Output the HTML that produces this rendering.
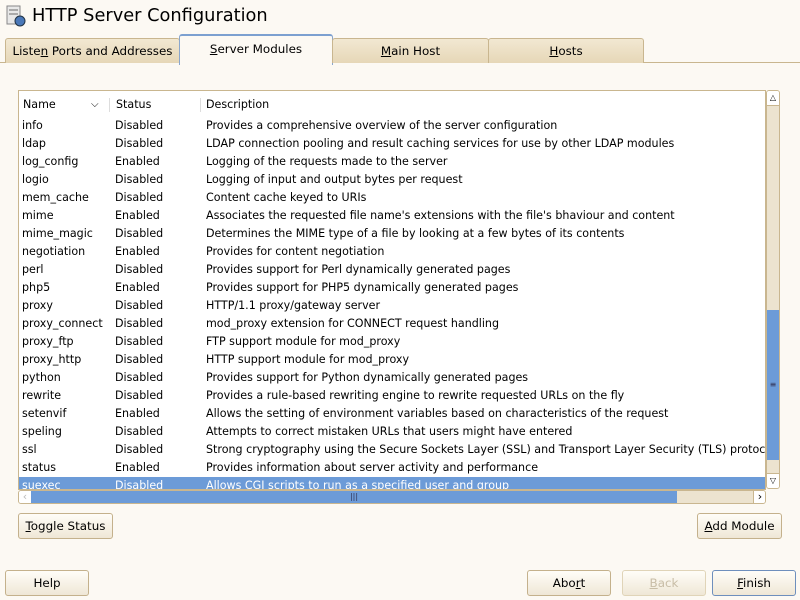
<!DOCTYPE html>
<html><head><style>
body{margin:0;width:800px;height:600px;background:#fcf9f3;font-family:"DejaVu Sans","Liberation Sans",sans-serif;font-size:11.1px;color:#000;position:relative;overflow:hidden}
.a{position:absolute}
.tab{position:absolute;top:38px;height:24px;border:1px solid #c9b68f;border-bottom:none;background:linear-gradient(#f2e8d2,#e6d7b7);text-align:center;line-height:24px;font-size:11.9px;border-radius:3px 3px 0 0}
.btn{position:absolute;height:24px;border:1px solid #c4b18c;border-radius:3px;background:linear-gradient(#fffdf8,#efe7d6);text-align:center;line-height:25px;font-size:11.9px}
.row{position:absolute;left:0;height:18px;line-height:18px;width:746px;white-space:nowrap}
.row span{position:absolute}
</style></head><body>
<svg class="a" style="left:5px;top:5px" width="22" height="22"><rect x="2" y="1" width="13" height="18" fill="#e8e8e8" stroke="#888"/><rect x="4" y="4" width="9" height="2" fill="#aaa"/><rect x="4" y="8" width="9" height="2" fill="#aaa"/><circle cx="15" cy="16" r="5" fill="#4a78b8" stroke="#234"/></svg>
<div class="a" style="left:32px;top:5px;font-size:17.8px">HTTP Server Configuration</div>
<div class="a" style="left:0;top:62px;width:800px;height:1px;background:#c9b68f"></div>
<div class="tab" style="left:5px;width:173px">Liste<u>n</u> Ports and Addresses</div>
<div class="tab" style="left:179px;top:34px;height:29px;width:152px;background:#fcf9f3;border-color:#8aa6cc;border-top:2px solid #7ca0d0;line-height:26px"><u>S</u>erver Modules</div>
<div class="tab" style="left:332px;width:155px"><u>M</u>ain Host</div>
<div class="tab" style="left:488px;width:154px"><u>H</u>osts</div>

<div class="a" style="left:18px;top:90px;width:746px;height:398px;border:1px solid #c9b68f;background:#fff;overflow:hidden">
 <div class="row" style="top:3px;height:22px;line-height:22px"><span style="left:4px">Name</span><span style="left:72px;font-size:10px">&#x2335;</span><span style="left:90px;top:4px;width:1px;height:14px;background:#ddd"></span><span style="left:97px">Status</span><span style="left:181px;top:4px;width:1px;height:14px;background:#ddd"></span><span style="left:187px">Description</span></div>
 <div id="rows"></div>
</div>
<div class="a" style="left:766px;top:90px;width:14px;height:399px;background:#ece3cf;border:1px solid #c9b68f;box-sizing:border-box;border-radius:3px;overflow:hidden">
 <div class="a" style="left:0;top:0;width:12px;height:14px;font-size:8px;line-height:14px;text-align:center;border-bottom:1px solid #c9b68f;background:#fff">&#9651;</div>
 <div class="a" style="left:0;top:219px;width:12px;height:150px;background:#6c9bd8;font-size:8px;color:#335;text-align:center;line-height:150px">≡</div>
 <div class="a" style="left:0;top:382px;width:12px;height:15px;font-size:8px;line-height:14px;text-align:center;border-top:1px solid #c9b68f;background:#fff">&#9661;</div>
</div>
<div class="a" style="left:18px;top:490px;width:748px;height:14px;background:#ece3cf;border:1px solid #c9b68f;box-sizing:border-box;border-radius:3px;overflow:hidden">
 <div class="a" style="left:0;top:0;width:12px;height:12px;background:#fff;color:#bbb;font-size:11px;line-height:12px;text-align:center">&lsaquo;</div>
 <div class="a" style="left:12px;top:0;width:646px;height:12px;background:#6c9bd8;font-size:8px;color:#335;text-align:center;line-height:12px">|||</div>
 <div class="a" style="left:734px;top:0;width:12px;height:12px;background:#fff;font-size:11px;text-align:center;line-height:12px;border-left:1px solid #c9b68f">&rsaquo;</div>
</div>

<div class="btn" style="left:18px;top:513px;width:93px"><u>T</u>oggle Status</div>
<div class="btn" style="left:697px;top:513px;width:83px"><u>A</u>dd Module</div>
<div class="btn" style="left:5px;top:570px;width:82px">Help</div>
<div class="btn" style="left:527px;top:570px;width:82px">Abo<u>r</u>t</div>
<div class="btn" style="left:622px;top:570px;width:82px;color:#c8bda6;border-color:#e0d4b8"><u>B</u>ack</div>
<div class="btn" style="left:712px;top:570px;width:82px;border-color:#6e8fbd"><u>F</u>inish</div>

<script>
var d=[["info","Disabled","Provides a comprehensive overview of the server configuration"],
["ldap","Disabled","LDAP connection pooling and result caching services for use by other LDAP modules"],
["log_config","Enabled","Logging of the requests made to the server"],
["logio","Disabled","Logging of input and output bytes per request"],
["mem_cache","Disabled","Content cache keyed to URIs"],
["mime","Enabled","Associates the requested file name's extensions with the file's bhaviour and content"],
["mime_magic","Disabled","Determines the MIME type of a file by looking at a few bytes of its contents"],
["negotiation","Enabled","Provides for content negotiation"],
["perl","Disabled","Provides support for Perl dynamically generated pages"],
["php5","Enabled","Provides support for PHP5 dynamically generated pages"],
["proxy","Disabled","HTTP/1.1 proxy/gateway server"],
["proxy_connect","Disabled","mod_proxy extension for CONNECT request handling"],
["proxy_ftp","Disabled","FTP support module for mod_proxy"],
["proxy_http","Disabled","HTTP support module for mod_proxy"],
["python","Disabled","Provides support for Python dynamically generated pages"],
["rewrite","Disabled","Provides a rule-based rewriting engine to rewrite requested URLs on the fly"],
["setenvif","Enabled","Allows the setting of environment variables based on characteristics of the request"],
["speling","Disabled","Attempts to correct mistaken URLs that users might have entered"],
["ssl","Disabled","Strong cryptography using the Secure Sockets Layer (SSL) and Transport Layer Security (TLS) protocols"],
["status","Enabled","Provides information about server activity and performance"],
["suexec","Disabled","Allows CGI scripts to run as a specified user and group"]];
var h="";d.forEach(function(r,i){var s=i==20?"background:#6c9bd8;color:#fff;":"";
h+='<div class="row" style="top:'+(26+i*18)+'px;'+s+'"><span style="left:3px">'+r[0]+'</span><span style="left:96px">'+r[1]+'</span><span style="left:187px">'+r[2]+'</span></div>';});
document.getElementById("rows").innerHTML=h;
</script>
</body></html>
